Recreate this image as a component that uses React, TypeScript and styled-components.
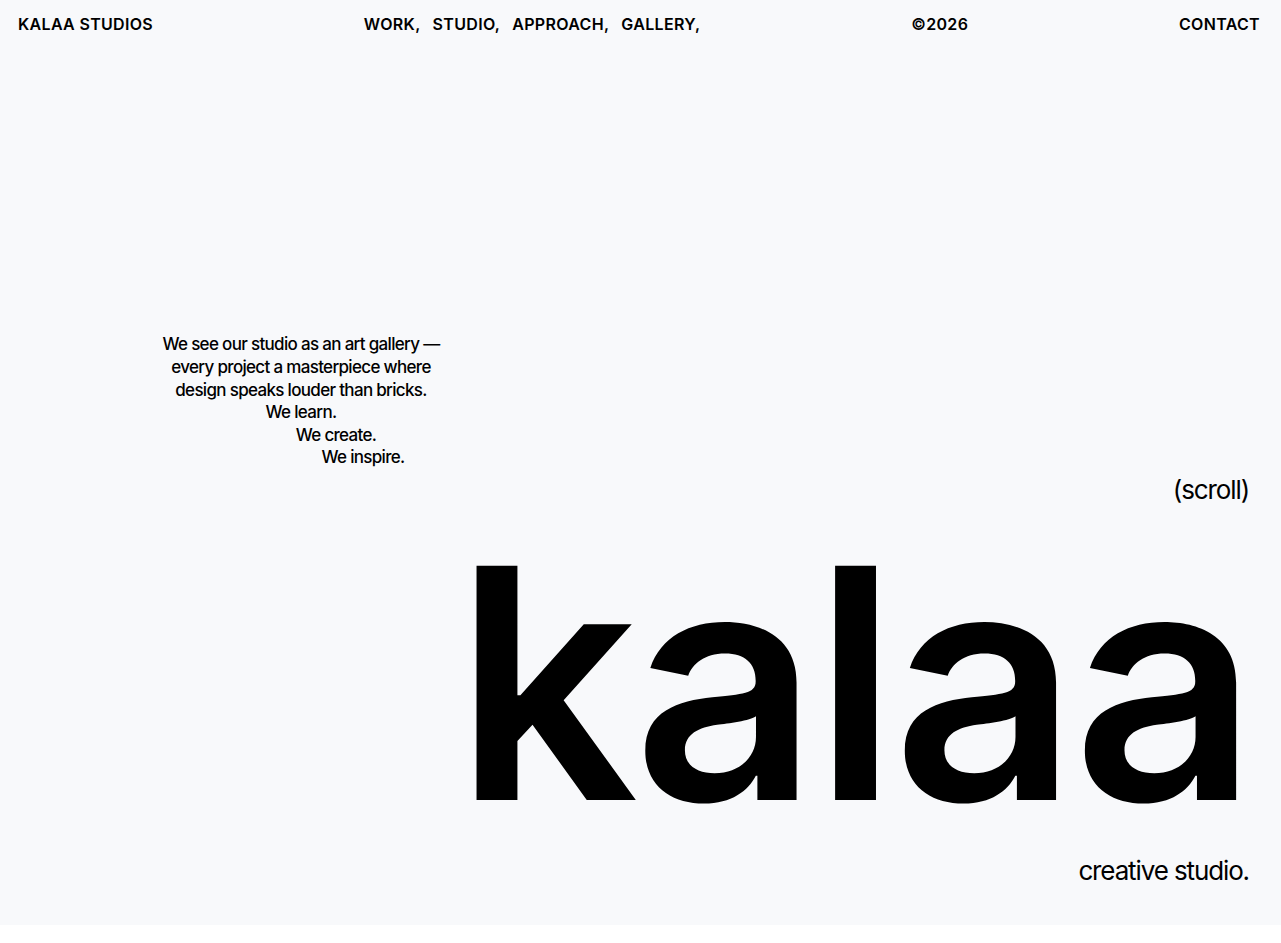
import styled, { createGlobalStyle } from 'styled-components';

const GlobalStyle = createGlobalStyle`
  html, body {
    margin: 0;
    padding: 0;
    background: #ffffff;
  }
  body {
    font-family: Inter, "Liberation Sans", Arial, sans-serif;
    color: #000;
  }
`;

// 첫 화면 전체
const HeroSection = styled.section`
  height: 925px;
  background-color: #f8f9fb;
  display: flex;
  flex-direction: column;
`;

// 상단 메뉴바
const TopBar = styled.header`
  display: flex;
  justify-content: space-between;
  align-items: center;
  padding: 14px 21px 0 18px;
  font-size: 16px;
  font-weight: 600;
  line-height: 20px;
  letter-spacing: 0.02em;
`;

const NavList = styled.nav`
  display: flex;
  gap: 12px;
`;

const NavLink = styled.a`
  color: inherit;
  text-decoration: none;
`;

// 본문 영역
const HeroBody = styled.div`
  flex: 1;
  display: flex;
  flex-direction: column;
  justify-content: flex-end;
  padding: 0 32px 38px 0;
`;

const Intro = styled.p`
  margin: 0 0 5px 150px;
  width: 302px;
  font-size: 17px;
  line-height: 22.6px;
  font-weight: 500;
  letter-spacing: -0.04em;
  text-align: center;
`;

const IntroLine = styled.span<{ $shift: number }>`
  display: block;
  padding-left: ${(p) => p.$shift}px;
`;

const SideNote = styled.div`
  align-self: flex-end;
  font-size: 26px;
  line-height: 32px;
  font-weight: 400;
  letter-spacing: -0.043em;
`;

const Wordmark = styled.h1`
  align-self: flex-end;
  margin: 37px -4px 32px 0;
  font-size: 322px;
  line-height: 280px;
  font-weight: 600;
  letter-spacing: -0.015em;
`;

export default function App() {
  return (
    <>
      <GlobalStyle />
      <HeroSection>
        <TopBar>
          <NavLink href="#">KALAA STUDIOS</NavLink>
          <NavList>
            <NavLink href="#">WORK,</NavLink>
            <NavLink href="#">STUDIO,</NavLink>
            <NavLink href="#">APPROACH,</NavLink>
            <NavLink href="#">GALLERY,</NavLink>
          </NavList>
          <span>©2026</span>
          <NavLink href="#">CONTACT</NavLink>
        </TopBar>
        <HeroBody>
          <Intro>
            We see our studio as an art gallery — every project a masterpiece where design speaks louder than bricks.
            <IntroLine $shift={0}>We learn.</IntroLine>
            <IntroLine $shift={70}>We create.</IntroLine>
            <IntroLine $shift={124}>We inspire.</IntroLine>
          </Intro>
          <SideNote>(scroll)</SideNote>
          <Wordmark>kalaa</Wordmark>
          <SideNote>creative studio.</SideNote>
        </HeroBody>
      </HeroSection>
    </>
  );
}
